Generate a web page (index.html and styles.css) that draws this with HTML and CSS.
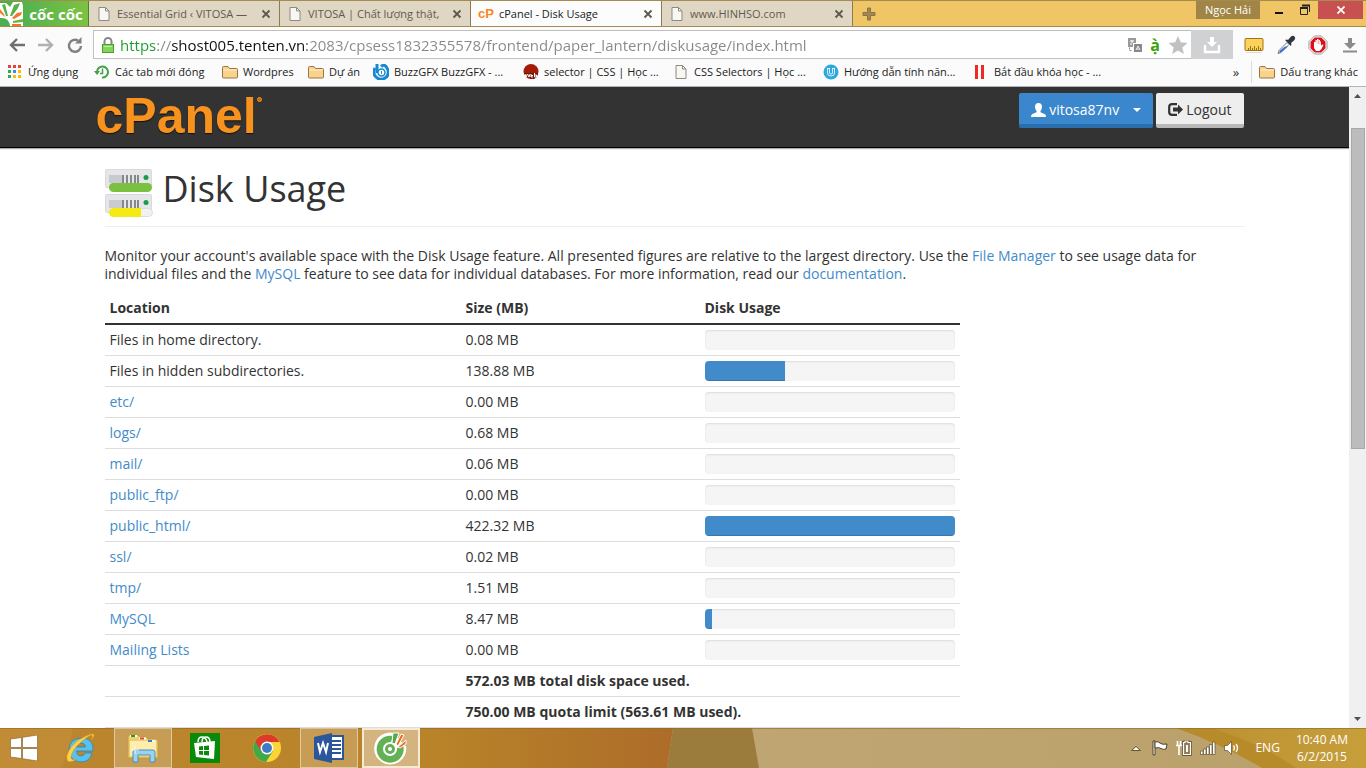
FILE: index.html
```html
<!DOCTYPE html>
<html lang="vi">
<head>
<meta charset="utf-8">
<meta name="viewport" content="width=device-width, initial-scale=1">
<title>cPanel - Disk Usage</title>
<link rel="stylesheet" href="styles.css">
</head>
<body>
<svg class="symbols" aria-hidden="true">
  <symbol id="doc" viewBox="0 0 16 16"><path d="M3 1.500h6.500l3.500 3.500v9.500h-10z" fill="#f8f7f4" stroke="#8d8a83"/><path d="M9.500 1.500v3.500h3.500" fill="none" stroke="#8d8a83"/></symbol>
  <symbol id="folder" viewBox="0 0 16 16"><path d="M.5 13V3.500q0-1 1-1H6l1.500 2h7q1 0 1 1V13q0 1-1 1h-13q-1 0-1-1z" fill="#f9d38c" stroke="#9a7442"/><path d="M1.500 6h13" stroke="#fff0c8"/></symbol>
  <symbol id="close" viewBox="0 0 10 10"><path d="M1.500 1.500l7 7M8.500 1.500l-7 7" stroke="#5d5950" stroke-width="1.800"/></symbol>
</svg>

<header class="chrome">
  <div class="tabstrip">
    <button class="brand" type="button">
      <svg width="24" height="25" viewBox="0 0 24 25" aria-hidden="true"><path d="M0 2h6l4 4 3-5h9l1 4v20H0z" fill="#fff"/><path d="M2 4l3-1 3 12H6z" fill="#57b04c"/><path d="M0 8l4 5 1 3-5-4z" fill="#f58026"/><path d="M10 15l4-11 6-2-2 5-6 8z" fill="#57b04c"/><path d="M12 17l5-5 5-1-1 3-7 4z" fill="#f5742a"/><path d="M0 17q9-1 10 8H0z" fill="#4caf50"/><path d="M13 20l10-2v3l-10 1z" fill="#69b548"/><path d="M12 23l9 0 0 2h-9z" fill="#f5742a"/></svg>
      <span>cốc cốc</span>
    </button>
    <div class="tab"><svg class="i16"><use href="#doc"/></svg><span class="tab-title">Essential Grid ‹ VITOSA —</span><button class="tab-close" type="button" aria-label="Đóng"><svg><use href="#close"/></svg></button></div>
    <div class="tab"><svg class="i16"><use href="#doc"/></svg><span class="tab-title">VITOSA | Chất lượng thật,</span><button class="tab-close" type="button" aria-label="Đóng"><svg><use href="#close"/></svg></button></div>
    <div class="tab active"><span class="cp">cP</span><span class="tab-title">cPanel - Disk Usage</span><button class="tab-close" type="button" aria-label="Đóng"><svg><use href="#close"/></svg></button></div>
    <div class="tab"><svg class="i16"><use href="#doc"/></svg><span class="tab-title">www.HINHSO.com</span><button class="tab-close" type="button" aria-label="Đóng"><svg><use href="#close"/></svg></button></div>
    <button class="new-tab" type="button" aria-label="Tab mới"><svg width="14" height="14" viewBox="0 0 14 14"><path d="M5.500 1h3v4.500H13v3H8.500V13h-3V8.500H1v-3h4.500z" fill="#a28654" stroke="#8c7344"/></svg></button>
    <div class="window-controls">
      <button class="profile" type="button">Ngọc Hải</button>
      <button class="win" type="button" aria-label="Minimize"><svg width="10" height="12" viewBox="0 0 10 12"><path d="M1 9h8" stroke="#111" stroke-width="2"/></svg></button>
      <button class="win" type="button" aria-label="Restore"><svg width="12" height="12" viewBox="0 0 12 12" fill="none" stroke="#222"><path d="M1.500 4v6.500h7V4M3 1.500h7.500V8"/><path d="M1 4h8M3 1.500h8" stroke-width="2"/></svg></button>
      <button class="win-close" type="button" aria-label="Close"><svg width="8" height="8" viewBox="0 0 8 8"><path d="M.5.5l7 7M7.500.5l-7 7" stroke="#fff" stroke-width="1.800"/></svg></button>
    </div>
  </div>

  <div class="toolbar">
    <button class="nav" type="button" aria-label="Quay lại"><svg width="16" height="16" viewBox="0 0 16 16"><path d="M16 8H2.500M8 2L2 8l6 6" fill="none" stroke="#707070" stroke-width="2.400"/></svg></button>
    <button class="nav" type="button" aria-label="Tiếp"><svg width="16" height="16" viewBox="0 0 16 16"><path d="M0 8h13.500M8 2l6 6-6 6" fill="none" stroke="#b0b0b0" stroke-width="2.400"/></svg></button>
    <button class="nav" type="button" aria-label="Tải lại"><svg width="16" height="16" viewBox="0 0 16 16"><path d="M11 3.500A6 6 0 1 0 14 9" fill="none" stroke="#808080" stroke-width="2.400"/><path d="M8 6.500h6.500V0z" fill="#808080"/></svg></button>
    <div class="omnibox">
      <svg width="14" height="16" viewBox="0 0 14 16"><path d="M3.500 8V4.500a3.500 3.500 0 0 1 7 0V8" fill="none" stroke="#888" stroke-width="2"/><rect x="1.500" y="7.500" width="11" height="8" fill="#87d45c" stroke="#4aa030"/><path d="M3 9.500h8" stroke="#b9f09a"/></svg>
      <input class="url" type="text" aria-label="Địa chỉ" value="https://shost005.tenten.vn:2083/cpsess1832355578/frontend/paper_lantern/diskusage/index.html">
      <svg width="14" height="14" viewBox="0 0 14 14"><rect x="0" y="0" width="8" height="9" fill="#999"/><path d="M2 3h4M4 2v3M2 6h2" stroke="#fff"/><rect x="5" y="5" width="9" height="9" fill="#fff"/><rect x="6" y="6" width="8" height="8" fill="#888"/><path d="M8 12l2-4 2 4M8.500 11h3" fill="none" stroke="#eee"/><path d="M1.500 9.500v3H4" fill="none" stroke="#888" stroke-dasharray="2 1"/></svg>
      <span class="accent">ạ̀</span>
      <svg width="20" height="20" viewBox="0 0 20 20"><path d="M10 1l2.700 6.300 6.800.6-5.200 4.500 1.600 6.600-5.900-3.500L4.100 19l1.600-6.600L.5 7.900l6.800-.6z" fill="#c1c1c1"/></svg>
    </div>
    <button class="save" type="button" aria-label="Lưu"><svg width="18" height="18" viewBox="0 0 18 18"><path d="M7 1h4v5h3l-5 5-5-5h3z" fill="#fff"/><path d="M2 9v7h14V9" fill="none" stroke="#fff" stroke-width="2.400"/></svg></button>
    <div class="extensions">
      <button class="ext" type="button" aria-label="Thước"><svg width="20" height="18" viewBox="0 0 20 18"><rect x="1" y="2.500" width="18" height="12" rx="1" fill="#fbd25c" stroke="#a47412"/><path d="M4.500 14v-2M6.500 14v-4M8.500 14v-2M10.500 14v-4M12.500 14v-2M14.500 14v-4M16.500 14v-2" stroke="#97700f"/><path d="M2 16.500h16" stroke="#ddd"/></svg></button>
      <button class="ext" type="button" aria-label="Chọn màu"><svg width="20" height="20" viewBox="0 0 20 20"><path d="M2 18.500l1-3 8-8 2 2-8 8z" fill="#fff" stroke="#777"/><path d="M3 17.500l1-2 5-4h3l-7 6z" fill="#3574d8"/><path d="M9 5l2-.5 1 .5 3-3.500q2-1.500 3.500 0t0 3.500L15 8l.5 1-.5 2z" fill="#30363d"/></svg></button>
      <button class="ext" type="button" aria-label="Chặn"><svg width="20" height="20" viewBox="0 0 20 20"><path d="M6.500 1h7L19 6.500v7L13.500 19h-7L1 13.500v-7z" fill="#fff" stroke="#999"/><path d="M6.800 2.500h6.400l4.300 4.300v6.400l-4.300 4.300H6.800l-4.300-4.300V6.800z" fill="#dc1019"/><path d="M6 7h1.500V5H9V4h1.500v1H12v1.500h1V11l1-1.500 1.500.5-2 4-2 2H8l-2-3z" fill="#fff"/><path d="M9 5v4M10.500 5v4M12 6v3" stroke="#e77b7b" stroke-width=".5"/></svg></button>
      <button class="ext" type="button" aria-label="Tải xuống"><svg width="16" height="18" viewBox="0 0 16 18"><path d="M6 2h4v5h4l-6 6-6-6h4z" fill="#8b8b8b"/><path d="M1 15.500h14" stroke="#8b8b8b" stroke-width="2"/></svg></button>
    </div>
  </div>

  <nav class="bookmarks">
    <a class="bm w87" href="#"><svg class="i16" viewBox="0 0 16 16"><path d="M1 1h3v3H1zM6 1h3v3H6zM11 1h3v3h-3z" fill="#ea4335"/><path d="M1 6h3v3H1z" fill="#34a853"/><path d="M6 6h3v3H6z" fill="#4285f4"/><path d="M11 6h3v3h-3z" fill="#fbbc05"/><path d="M1 11h3v3H1z" fill="#34a853"/><path d="M6 11h3v3H6zM11 11h3v3h-3z" fill="#fbbc05"/></svg>Ứng dụng</a>
    <a class="bm w128" href="#"><svg class="i16" viewBox="0 0 16 16"><path d="M3 8a5.500 5.500 0 1 1 5 5.500" fill="none" stroke="#45a049" stroke-width="2"/><path d="M0 7h6l-3 4z" fill="#45a049"/><path d="M8.500 4.500v5H6" fill="none" stroke="#45a049" stroke-width="1.500"/></svg>Các tab mới đóng</a>
    <a class="bm w86" href="#"><svg class="i16"><use href="#folder"/></svg>Wordpres</a>
    <a class="bm w65" href="#"><svg class="i16"><use href="#folder"/></svg>Dự án</a>
    <a class="bm w150" href="#"><svg class="i16" viewBox="0 0 16 16"><path d="M4 0v9" stroke="#1688d2" stroke-width="3"/><path d="M2 4Q-1 9 3 13t9 1 2.500-9T8 2.500" fill="none" stroke="#1688d2" stroke-width="3"/><circle cx="8.500" cy="8.500" r="3.500" fill="#fff" stroke="#1688d2" stroke-width="1.500"/><path d="M8.500 7v3" stroke="#1688d2"/></svg>BuzzGFX BuzzGFX - ...</a>
    <a class="bm w150" href="#"><svg class="i16" viewBox="0 0 16 16"><circle cx="8" cy="7.500" r="7.500" fill="#a31c09"/><path d="M1 9h14l-1 4-3 2H8z" fill="#6c170c"/><path d="M2 10l1 3 1.500-3 1.500 3 1-3M8 10v3h2M8 11.500h2M11.500 9v4h2v-2h-2" fill="none" stroke="#fff"/></svg>selector | CSS | Học ...</a>
    <a class="bm w150" href="#"><svg class="i16"><use href="#doc"/></svg>CSS Selectors | Học ...</a>
    <a class="bm w150" href="#"><svg class="i16" viewBox="0 0 16 16"><circle cx="8" cy="8" r="7.500" fill="#2da9df"/><path d="M4.500 4v5q0 3 3.500 3t3.500-3V4M6.500 4v5q0 1 1.500 1t1.500-1V4M4 4.500h3M9 4.500h3" fill="none" stroke="#fff" stroke-width=".8"/></svg>Hướng dẫn tính năn...</a>
    <a class="bm w150" href="#"><svg class="i16" viewBox="0 0 16 16"><path d="M3.500 1v14M9.500 1v14" stroke="#ee2a24" stroke-width="3"/></svg>Bắt đầu khóa học - ...</a>
    <button class="more" type="button">»</button>
    <a class="bm other" href="#"><svg class="i16"><use href="#folder"/></svg>Dấu trang khác</a>
  </nav>
</header>

<div class="viewport">
  <main class="page" lang="en">
    <div class="masthead">
      <div class="container masthead-row">
        <a class="logo" href="#">cPanel<svg width="5" height="5" viewBox="0 0 5 5" aria-hidden="true"><circle cx="2.500" cy="2.500" r="2" fill="#b8681a" stroke="#f8921e"/></svg></a>
        <div class="account">
          <button class="btn primary" type="button"><svg width="15" height="14" viewBox="0 0 15 14"><path d="M7.500 0q3.500 0 3.500 4 0 2.500-1.500 4v1.200l4.500 2q1 .8 1 2.800H0q0-2 1-2.800l4.500-2V8Q4 6.500 4 4q0-4 3.500-4z" fill="#fff"/></svg>vitosa87nv<span class="caret"></span></button>
          <button class="btn plain" type="button"><svg width="15" height="13" viewBox="0 0 15 13"><path d="M9 1.200H4Q1.200 1.200 1.200 4v5q0 2.800 2.800 2.800h5" fill="none" stroke="#333" stroke-width="2.200"/><path d="M5 4.500h5V1.500l5 5-5 5v-3H5z" fill="#333"/></svg>Logout</button>
        </div>
      </div>
    </div>

    <div class="container content">
      <h1><svg width="48" height="48" viewBox="0 0 48 48" aria-hidden="true"><g id="drive"><rect x=".5" y=".5" width="46" height="18" rx="1" fill="#e4e6e7" stroke="#d8dadb"/><path d="M4 6h13v8H4z" fill="#c9cbd0"/><path d="M18 6v8M22 6v8M26 6v8M30 6v8M33 6v8" stroke="#86888c" stroke-width="2"/><circle cx="41" cy="8.500" r="2.500" fill="#199b4c"/></g><rect x="4" y="14" width="43" height="9" rx="4.500" fill="#7ac142"/><use href="#drive" y="25"/><rect x="4.500" y="39.500" width="43" height="8" rx="4" fill="#f2f2f2" stroke="#ddd"/><path d="M8 39h28v9H8q-4-1-4-4.500T8 39z" fill="#f6ea14"/></svg>Disk Usage</h1>
      <p class="intro">Monitor your account's available space with the Disk Usage feature. All presented figures are relative to the largest directory. Use the <a href="#">File Manager</a> to see usage data for individual files and the <a href="#">MySQL</a> feature to see data for individual databases. For more information, read our <a href="#">documentation</a>.</p>
      <table class="usage">
        <thead><tr><th class="c-loc" scope="col">Location</th><th class="c-size" scope="col">Size (MB)</th><th scope="col">Disk Usage</th></tr></thead>
        <tbody>
          <tr><td>Files in home directory.</td><td>0.08 MB</td><td><div class="bar"></div></td></tr>
          <tr><td>Files in hidden subdirectories.</td><td>138.88 MB</td><td><div class="bar"><div class="fill" style="width:32%"></div></div></td></tr>
          <tr><td><a href="#">etc/</a></td><td>0.00 MB</td><td><div class="bar"></div></td></tr>
          <tr><td><a href="#">logs/</a></td><td>0.68 MB</td><td><div class="bar"></div></td></tr>
          <tr><td><a href="#">mail/</a></td><td>0.06 MB</td><td><div class="bar"></div></td></tr>
          <tr><td><a href="#">public_ftp/</a></td><td>0.00 MB</td><td><div class="bar"></div></td></tr>
          <tr><td><a href="#">public_html/</a></td><td>422.32 MB</td><td><div class="bar"><div class="fill" style="width:100%"></div></div></td></tr>
          <tr><td><a href="#">ssl/</a></td><td>0.02 MB</td><td><div class="bar"></div></td></tr>
          <tr><td><a href="#">tmp/</a></td><td>1.51 MB</td><td><div class="bar"></div></td></tr>
          <tr><td><a href="#">MySQL</a></td><td>8.47 MB</td><td><div class="bar"><div class="fill" style="width:3%"></div></div></td></tr>
          <tr><td><a href="#">Mailing Lists</a></td><td>0.00 MB</td><td><div class="bar"></div></td></tr>
          <tr class="total"><td></td><td colspan="2">572.03 MB total disk space used.</td></tr>
          <tr class="total"><td></td><td colspan="2">750.00 MB quota limit (563.61 MB used).</td></tr>
        </tbody>
      </table>
    </div>
  </main>
  <div class="scrollbar" aria-hidden="true">
    <svg width="17" height="17" viewBox="0 0 17 17"><path d="M5 11l3.500-4L12 11z" fill="#505050"/></svg>
    <div class="track"><div class="thumb"></div></div>
    <svg width="17" height="17" viewBox="0 0 17 17"><path d="M5 6l3.500 4L12 6z" fill="#505050"/></svg>
  </div>
</div>

<footer class="taskbar" lang="en">
  <svg class="wallpaper" viewBox="0 0 1366 40" preserveAspectRatio="none" aria-hidden="true">
    <defs><linearGradient id="g1"><stop offset="0" stop-color="#bb862d"/><stop offset=".65" stop-color="#b88329"/><stop offset="1" stop-color="#ad6c29"/></linearGradient><linearGradient id="g2"><stop offset="0" stop-color="#c4aa79"/><stop offset="1" stop-color="#baa16b"/></linearGradient><linearGradient id="g3"><stop offset="0" stop-color="#bb8f32"/><stop offset="1" stop-color="#c69e3a"/></linearGradient></defs>
    <path d="M0 0h1366v40H0z" fill="url(#g2)"/><path d="M0 0h673l-6 40H0z" fill="url(#g1)"/><path d="M0 0h73q-3 20-12 40H0z" fill="#c18c35"/><path d="M673 0h79l7 40h-92z" fill="#9b7c3d"/><path d="M1176 0h190v40h-104q-40-24-86-40z" fill="url(#g3)"/><path d="M1176 0h35q50 15 85 40h-34q-40-24-86-40z" fill="#b88b2a"/><path d="M0 .5h1366" stroke="#8d6b2b" opacity=".6"/>
  </svg>
  <div class="tasks">
    <button class="start" type="button" aria-label="Start"><svg width="28" height="26" viewBox="0 0 28 26"><path d="M.5 4l11-1.500v10H.5zM12.500 2.300L27.500 0v12.500h-15zM.5 13.500h11v10L.5 22zM12.500 13.500h15V26l-15-2.300z" fill="#fff" stroke="#8b6a30" stroke-width=".7"/></svg></button>
    <button class="task" type="button" aria-label="Internet Explorer"><svg width="32" height="32" viewBox="0 0 32 32"><path d="M27 21H20q-1 3-4 3-4 0-4.500-5H28Q29 6 16 6 4 7 4 18t12 12q9 0 11-9zM11.500 15q.5-4 4.500-4t4.500 4z" fill="#58c1ee" stroke="#2a87bd" stroke-width=".8" fill-rule="evenodd"/><path d="M26 8q5-5 2-6T12 9Q0 20 2 28q2 4 10-1-6 2-6-2 1-7 9-14T26 3q3 0 0 5z" fill="#ffd04a" stroke="#d59b1a" stroke-width=".6"/></svg></button>
    <button class="task open" type="button" aria-label="File Explorer"><svg width="34" height="32" viewBox="0 0 34 32"><path d="M2 26V5q0-2 2-2h8l2 2h6l2 2h8q2 0 2 2v17z" fill="#edcf70" stroke="#c29b3d"/><path d="M4 9h26v15H4z" fill="#ffedab"/><path d="M4 3h7v2H4zM13 5.500h7v2h-7zM22 8h7v2h-7z" fill="#fff"/><path d="M5 3h4v2H5z" fill="#26992c"/><path d="M14 5.500h4v2h-4z" fill="#d94c33"/><path d="M22 8h4v2h-4z" fill="#2c82d4"/><path d="M7 30V20q0-2 2-2h18q2 0 2 2v10h-5v-7H12v7z" fill="#9bd2ee" stroke="#4b90ba"/><path d="M9 14v8M5 18h8" stroke="#fff" opacity=".8"/></svg></button>
    <button class="task" type="button" aria-label="Store"><svg width="30" height="30" viewBox="0 0 30 30"><path d="M0 0h30v30H0z" fill="#0a8a0a"/><path d="M8 9q0-5 4-5t5 5M12 9q0-5 4-5t4 5" fill="none" stroke="#fff" stroke-width="1.500"/><path d="M4 10l21-2-1 18-18-2z" fill="#fff"/><path d="M9 13.500l4-.5v4H9zM14 13l5-.5V17h-5zM9 18h4v4l-4-.5zM14 18h5v4.500l-5-.5z" fill="#0a8a0a"/></svg></button>
    <button class="task" type="button" aria-label="Chrome"><svg width="28" height="28" viewBox="0 0 28 28"><circle cx="14" cy="14" r="14" fill="#fcd535"/><path d="M14 14L2 7A14 14 0 0 0 13 28l7-11z" fill="#43a847"/><path d="M2 7a14 14 0 0 1 24.500 1H14l-6 9z" fill="#dc3b2c"/><circle cx="14" cy="14" r="6.500" fill="#fff"/><circle cx="14" cy="14" r="5" fill="#3c7bc6"/></svg></button>
    <button class="task open" type="button" aria-label="Word"><svg width="32" height="30" viewBox="0 0 32 30"><path d="M17 3h13v23H17z" fill="#fff" stroke="#2b579a" stroke-width="2"/><path d="M19 8h9M19 12h9M19 16h9M19 20h9" stroke="#2b579a" stroke-width="2"/><path d="M1 4l18-4v30L1 26z" fill="#2b579a"/><path d="M5 10l2 9 3-9 3 9 2-9" fill="none" stroke="#fff" stroke-width="2"/></svg></button>
    <button class="task current" type="button" aria-label="Cốc Cốc"><svg width="34" height="34" viewBox="0 0 34 34"><path d="M20 3A15 15 0 1 0 31 15" fill="#fff" stroke="#fff" stroke-width="2"/><path d="M19 5A13.500 13.500 0 1 0 29 14l-6 3a7 7 0 1 1-6-6z" fill="#62b255"/><circle cx="16" cy="18" r="3.500" fill="#fff" stroke="#62b255" stroke-width="3"/><path d="M18 12l1-10h6l-4 11z" fill="#4faa48" stroke="#fff"/><path d="M22 13l5-10 3 1-6 11z" fill="#f26b21" stroke="#fff"/><path d="M24 16l8-7v4l-6 4z" fill="#f26b21" stroke="#fff"/></svg></button>
  </div>
  <div class="tray">
    <svg width="16" height="16" viewBox="0 0 16 16"><path d="M3.500 10.500l4.500-4 4.500 4z" fill="#fff" stroke="#665233"/></svg>
    <svg width="16" height="16" viewBox="0 0 16 16"><path d="M1 1h2v14H1z" fill="#fff" stroke="#4f4128"/><path d="M3 2q3-1 5 1t7 1l-1 5q-3 1-5-.5T3 8z" fill="#fff" stroke="#4f4128"/></svg>
    <svg width="16" height="16" viewBox="0 0 16 16"><path d="M9 1h3v1.500h2.500v12h-7v-12H9z" fill="none" stroke="#4f4128" stroke-width="2.500"/><path d="M9 1h3v1.500h2.500v12h-7v-12H9z" fill="#8f7c55" stroke="#fff" stroke-width="1.200"/><path d="M10 5h2v7h-2z" fill="#fff"/><path d="M1.500 1v4M4.500 1v4M0 5.500h6M3 6v9" fill="none" stroke="#fff" stroke-width="1.600"/></svg>
    <svg width="16" height="16" viewBox="0 0 16 16"><path d="M.5 11h2.500v3.500H.5zM3.500 9H6v5.500H3.500zM6.500 7H9v7.500H6.500zM9.500 4.500H12v10H9.500zM12.500 2H15v12.500h-2.500z" fill="#fff" stroke="#5f4c28" stroke-width=".7"/></svg>
    <svg width="16" height="16" viewBox="0 0 16 16"><path d="M.5 5.500h3l4-4v13l-4-4h-3z" fill="#fff" stroke="#5f4c28" stroke-width=".7"/><path d="M9.500 5.500q2 2.500 0 5M12 4q3 4 0 8" fill="none" stroke="#fff" stroke-width="1.300"/></svg>
    <span class="lang">ENG</span>
    <time class="clock" datetime="2015-06-02T10:40">10:40 AM<br>6/2/2015</time>
  </div>
</footer>
</body>
</html>
```
FILE: styles.css
```css
* { box-sizing: border-box; }

body {
  margin: 0;
  height: 100vh;
  display: flex;
  flex-direction: column;
  overflow: hidden;
  font-family: "Open Sans", "Noto Sans", sans-serif;
  font-size: 14px;
  line-height: 18px;
  color: #333;
  background: #fff;
}

button { font: inherit; border: 0; padding: 0; background: none; color: inherit; }
a { color: #428bca; text-decoration: none; }
svg { flex: none; display: block; }
.symbols { position: absolute; width: 0; height: 0; }
.i16 { width: 16px; height: 16px; }

/* Browser chrome */
.chrome { flex: none; background: #fbfbfb; border-bottom: 1px solid #b5b5b5; font-size: 11px; }
.tabstrip { display: flex; height: 27px; background: #f0c566; border-top: 1px solid #a58b50; border-bottom: 1px solid #a58b50; }
.brand { display: flex; align-items: center; width: 89px; background: linear-gradient(90deg, #45ad50, #7cc242); border-right: 1px solid #4b7f3a; }
.brand span { flex: 1; color: #fff; font: 700 15px "Noto Sans", sans-serif; }
.tab { display: flex; align-items: center; gap: 5px; width: 191px; padding: 0 8px 0 7px; background: #dfd6c3; border-right: 1px solid #8f7b50; color: #5f5b52; min-width: 0; }
.tab.active { background: #fcfcfc; color: #222; }
.tab-title { flex: 1; overflow: hidden; white-space: nowrap; }
.tab-close { width: 10px; height: 10px; }
.tab-close svg { width: 10px; height: 10px; }
.cp { color: #f6871f; font: bold 13px "Liberation Sans", sans-serif; }
.new-tab { width: 32px; display: grid; place-items: center; }
.window-controls { display: flex; align-items: flex-start; margin-left: auto; padding-right: 3px; }
.profile { width: 64px; height: 18px; background: #a18546; color: #fff; }
.win { width: 26px; height: 18px; display: grid; place-items: center; }
.profile + .win { margin-left: 6px; }
.win-close { width: 45px; height: 18px; background: #c75050; display: grid; place-items: center; }

.toolbar { display: flex; align-items: center; height: 33px; padding: 2px 6px 0 9px; }
.nav { width: 29px; height: 24px; }
.nav:nth-of-type(3) { width: 24px; }
.omnibox { flex: 1; display: flex; align-items: center; gap: 8px; min-width: 0; height: 29px; margin-left: 2px; padding: 0 3px 0 7px; background: #fff; border: 1px solid #c0c0c0; border-right: 0; }
.url {
  flex: 1;
  min-width: 0;
  padding: 0;
  margin-left: -3px;
  border: 0;
  outline: 0;
  font: 15px/24px "Open Sans", sans-serif;
  color: transparent;
  background: linear-gradient(90deg, #1a9a2a 37px, #888 37px 52px, #111 52px 187px, #888 187px);
  background-clip: text;
}
.accent { color: #3aa20c; font-size: 16px; font-weight: 700; }
.save { width: 42px; height: 29px; background: #d0d1d3; display: grid; place-items: center; }
.extensions { display: flex; gap: 12px; padding-left: 11px; }
.ext { width: 20px; height: 20px; display: grid; place-items: center; }

.bookmarks { display: flex; align-items: center; height: 26px; padding: 0 8px 2px 7px; }
.bm { display: flex; align-items: center; gap: 5px; flex: 0 0 auto; color: #222; white-space: nowrap; }
.w65 { width: 65px; }
.w86 { width: 86px; }
.w87 { width: 87px; }
.w128 { width: 128px; }
.w150 { width: 150px; }
.more { margin-left: auto; padding-right: 12px; font-size: 13px; }
.other { padding-left: 7px; border-left: 1px solid #d5dfe8; height: 22px; }

/* Page */
.viewport { flex: 1; min-height: 0; display: flex; }
.page { flex: 1; min-width: 0; overflow: hidden; }
.container { max-width: 1140px; margin: 0 auto; }
.masthead { background: #333; border-bottom: 1px solid #000; box-shadow: 0 1px 1px #aaa; }
.masthead-row { display: flex; justify-content: space-between; height: 60px; }
.logo { display: flex; margin: 3px 0 0 -9px; color: #f8921e; font: bold 50px/52px "Liberation Sans", sans-serif; text-shadow: 0 1px 1px #111; }
.logo svg { margin-top: 7px; }
.account { display: flex; gap: 3px; padding: 6px 1px 0 0; align-items: flex-start; }
.btn { display: flex; align-items: center; gap: 3px; height: 35px; padding: 2px 12px 0; border-radius: 2px; }
.primary { color: #fff; background: #3a87cd; border-bottom: 4px solid #2a6fad; }
.plain { background: #eee; border-bottom: 4px solid #b8b8b8; }
.caret { margin: 0 0 0 11px; border: 4px solid transparent; border-top-color: #fff; border-bottom: 0; }

h1 { display: flex; align-items: flex-start; gap: 10px; margin: 0 0 20px; padding: 21px 0 9px; border-bottom: 1px solid #eee; font-size: 36px; font-weight: 400; line-height: 40px; }
.intro { margin: 0 0 9px; }
.usage { width: 75%; border-collapse: collapse; table-layout: fixed; }
.usage th { padding: 7px 5px 6px; text-align: left; font-weight: 700; border-bottom: 2px solid #333; }
.usage td { height: 31px; padding: 5px; border-bottom: 1px solid #ddd; }
.c-loc { width: 356px; }
.c-size { width: 239px; }
.total { font-weight: 700; }
.bar { height: 20px; overflow: hidden; border-radius: 4px; background: #f5f5f5; box-shadow: inset 0 1px 2px rgba(0, 0, 0, .1); }
.fill { height: 100%; background: #428bca; box-shadow: inset 0 -1px 0 rgba(0, 0, 0, .15); }

.scrollbar { flex: none; display: flex; flex-direction: column; width: 17px; background: #f0f0f0; }
.track { flex: 1; padding: 24px 1px 0 2px; }
.thumb { height: 55%; background: #bcbcbc; border: 1px solid #a8a8a8; }

/* Taskbar */
.taskbar { flex: none; position: relative; display: flex; justify-content: space-between; height: 40px; color: #fff; font-size: 12px; }
.wallpaper { position: absolute; inset: 0; width: 100%; height: 100%; }
.tasks { position: relative; display: flex; gap: 4px; }
.start { width: 48px; display: grid; place-items: center; }
.task { width: 58px; display: grid; place-items: center; }
.open { background: rgba(255, 255, 255, .2); border: 1px solid rgba(255, 255, 255, .45); }
.current { background: rgba(255, 255, 255, .4); border: 2px solid #f4ead6; }
.tray { position: relative; display: flex; align-items: center; gap: 8px; padding-right: 18px; }
.lang { padding-left: 7px; }
.clock { padding-left: 8px; text-align: center; line-height: 17px; }
```
